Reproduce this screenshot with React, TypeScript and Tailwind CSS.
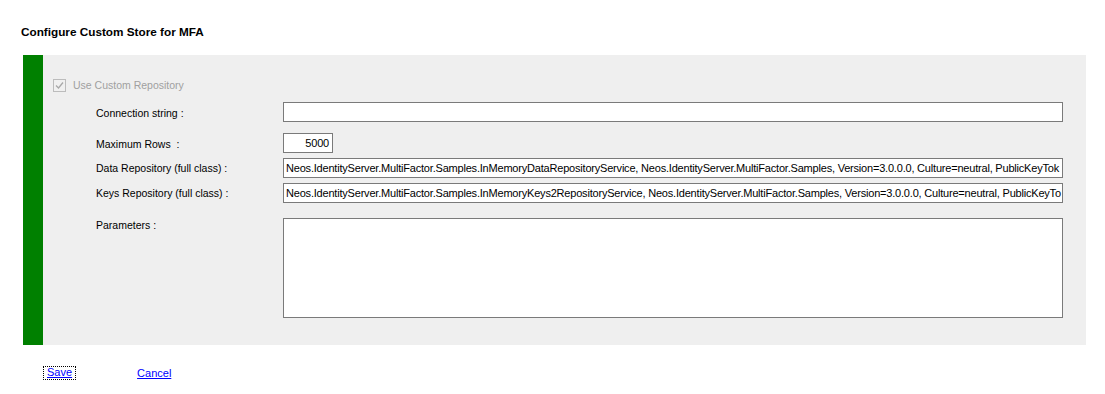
import React from 'react';

// the boxes are narrower than the class names, so only the visible part is shown
const DATA_REPO =
  'Neos.IdentityServer.MultiFactor.Samples.InMemoryDataRepositoryService, Neos.IdentityServer.MultiFactor.Samples, Version=3.0.0.0, Culture=neutral, PublicKeyTok';
const KEYS_REPO =
  'Neos.IdentityServer.MultiFactor.Samples.InMemoryKeys2RepositoryService, Neos.IdentityServer.MultiFactor.Samples, Version=3.0.0.0, Culture=neutral, PublicKeyTo';

function Field({ value, className = '' }: { value?: string; className?: string }) {
  return (
    <div
      className={`h-[20px] border border-[#7a7a7a] bg-white pl-[2px] pr-[2px] text-[11px] leading-[18px] whitespace-nowrap overflow-hidden tracking-[-0.2px] ${className}`}
    >
      {value}
    </div>
  );
}

export default function App() {
  return (
    <div className="w-[1105px] h-[394px] bg-white text-black text-[10.5px] font-['Liberation_Sans',Arial,sans-serif]">
      <div className="h-[55px] pl-[21px] pt-[25px] text-[11.75px] leading-[14px] font-bold">
        Configure Custom Store for MFA
      </div>

      <div className="ml-[23px] w-[1063px] h-[290px] flex bg-[#efefef]">
        <div className="w-[20px] bg-[#008000]" />
        <div className="flex-1 pt-[24px]">
          {/* disabled checkbox */}
          <div className="flex items-center h-[13px] pl-[10px] gap-[7px] text-[#a0a0a0]">
            <svg width="13" height="13" viewBox="0 0 13 13">
              <rect x="0.5" y="0.5" width="12" height="12" fill="#f0f0f0" stroke="#bcbcbc" />
              <path d="M3 6.5 L5.5 9 L10 3.5" fill="none" stroke="#a8a8a8" strokeWidth="1.3" />
            </svg>
            <span className="leading-[13px]">Use Custom Repository</span>
          </div>

          <div className="mt-[10px] pl-[53px] grid grid-cols-[187px_780px]">
            <div className="h-[20px] leading-[22px]">Connection string :</div>
            <Field />

            <div className="mt-[11px] h-[20px] leading-[22px]">Maximum Rows&nbsp; :</div>
            <Field value="5000" className="mt-[11px] w-[50px] text-right pr-[3px]" />

            <div className="mt-[5px] h-[20px] leading-[20px]">Data Repository (full class) :</div>
            <Field value={DATA_REPO} className="mt-[5px]" />

            <div className="mt-[5px] h-[20px] leading-[20px]">Keys Repository (full class) :</div>
            <Field value={KEYS_REPO} className="mt-[5px]" />

            <div className="mt-[15px] pt-[1px] leading-[13px]">Parameters :</div>
            <div className="mt-[15px] h-[100px] border border-[#7a7a7a] bg-white" />
          </div>
        </div>
      </div>

      <div className="mt-[21px] pl-[43px] flex items-center text-[11px] leading-[11px] text-[#0000ff]">
        <span className="border border-dotted border-black px-[3px] pb-[1px] underline">Save</span>
        <span className="ml-[61px] underline">Cancel</span>
      </div>
    </div>
  );
}
